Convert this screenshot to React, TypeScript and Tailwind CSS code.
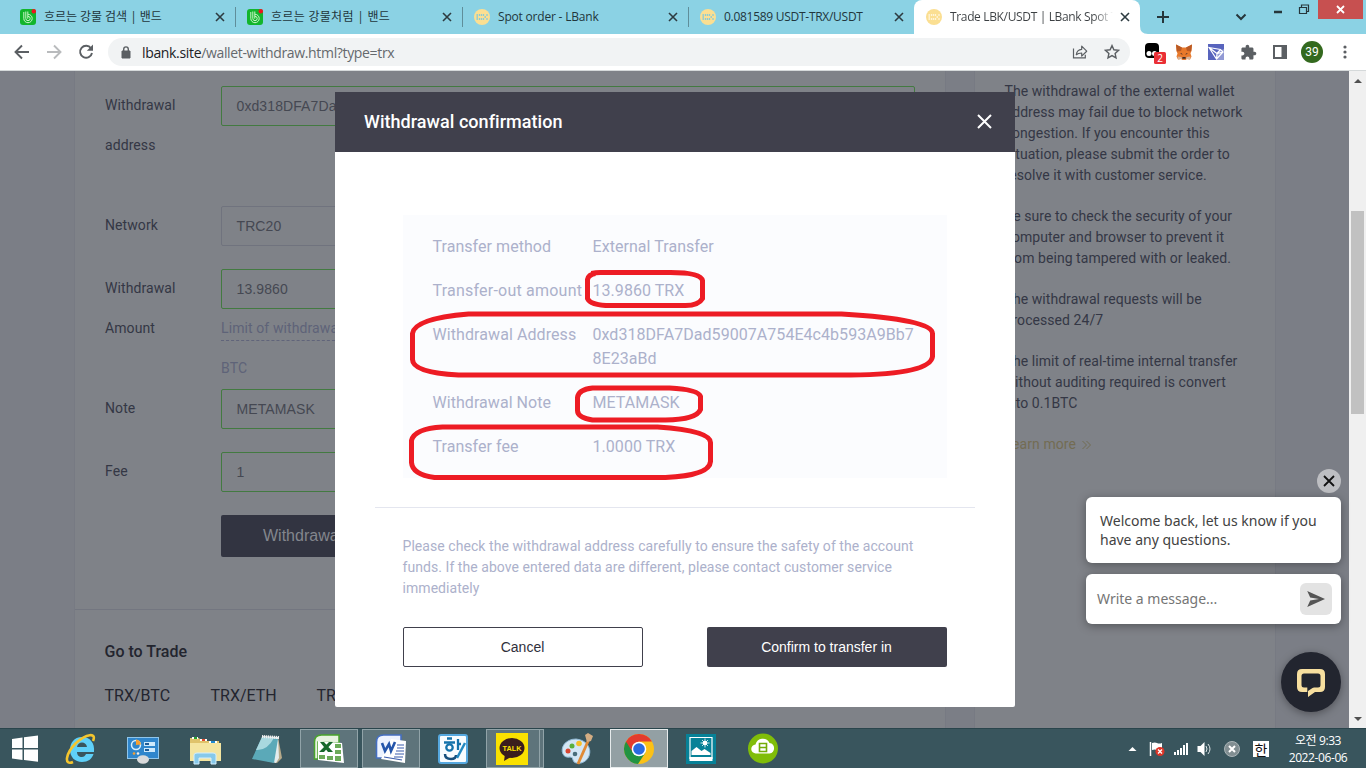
import type { ReactNode } from 'react';

const Cross = ({ size = 8, w = 1.6, color = '#2d3b40' }: { size?: number; w?: number; color?: string }) => (
  <svg width={size} height={size} viewBox="0 0 8 8" className="shrink-0 overflow-visible">
    <path d="M0 0L8 8M8 0L0 8" stroke={color} strokeWidth={(w * 8) / size} />
  </svg>
);

const BandIcon = () => (
  <svg width="16" height="16" viewBox="0 0 16 16" className="shrink-0">
    <rect width="16" height="16" rx="3" fill="#12b52c" />
    <path d="M3.800 3v6.500a4.200 4.200 0 1 0 4.200-4.200M5.800 2.500v7a2.200 2.200 0 1 0 2.200-2.200M7.800 2.500V9.700" fill="none" stroke="#c9f5c6" strokeWidth="1" />
    <circle cx="13.8" cy="2.2" r="2.2" fill="#f0141e" />
  </svg>
);

const BankIcon = ({ fg }: { fg: string }) => (
  <svg width="16" height="16" viewBox="0 0 16 16" className="shrink-0">
    <circle cx="8" cy="8" r="8" fill="#fbdf92" />
    <path d="M3.200 5v6M5.500 5v2M5.500 9v2M7.500 5v2M7.500 9v2M9.500 5v2M9.500 9v2M11.200 7v2M13 5v2M13 9v2" stroke={fg} strokeWidth="1.300" fill="none" />
  </svg>
);

const Tab = ({ icon, title, active, className, text }: { icon: ReactNode; title: string; active?: boolean; className: string; text: string }) => (
  <div className={`flex h-[34px] shrink-0 items-center ${className}`}>
    {icon}
    <span className={`ml-2 shrink-0 overflow-hidden whitespace-nowrap text-[12px] leading-4 ${text} ${active ? 'bg-linear-to-r from-[#3c4043] from-88% to-white bg-clip-text text-transparent' : 'text-[#22363c]'}`}>{title}</span>
    <span className="flex w-2"><Cross /></span>
  </div>
);

const Divider = () => <div className="mt-[7px] h-5 w-px shrink-0 bg-[#5f8e9a]" />;

const Toolbar = () => (
  <div className="flex h-9 items-center bg-white">
    <svg width="108" height="36" viewBox="0 0 108 36" className="shrink-0" fill="none" strokeWidth="1.9">
      <path d="M29 18H16M22 11.5L15.5 18L22 24.5" stroke="#5b5f63" />
      <path d="M47 18H60M54 11.5L60.5 18L54 24.5" stroke="#b9bbbd" />
      <path d="M91 14.2A6 6 0 1 0 92 19" stroke="#5b5f63" />
      <path d="M93 10.5v6.2h-6.2z" fill="#5b5f63" />
    </svg>
    <div className="flex h-7 w-[1022px] shrink-0 items-center rounded-full bg-[#f1f3f4] pl-[13px] pr-[10px]">
      <svg width="10" height="13" viewBox="0 0 10 13">
        <path d="M1 5h8v7H1z" fill="#5b5f63" stroke="#5b5f63" strokeLinejoin="round" />
        <path d="M2.7 5V3.2a2.3 2.3 0 0 1 4.6 0V5" fill="none" stroke="#5b5f63" strokeWidth="1.4" />
      </svg>
      <span className="ml-[11px] text-[14px] tracking-[-0.34px] text-[#202124]">lbank.site<span className="text-[#65696d]">/wallet-withdraw.html?type=trx</span></span>
      <svg width="16" height="16" viewBox="0 0 16 16" className="ml-auto" fill="none" stroke="#5b5f63" strokeWidth="1.2">
        <path d="M1.5 4.5v9.3h11.8v-3" />
        <path d="M4.3 10.7c.4-3.4 2.2-5.2 5.4-5.4V2.2l5 5-5 4.9V9c-2.2 0-4 .4-5.4 1.7z" strokeLinejoin="round" />
      </svg>
      <svg width="16" height="16" viewBox="0 0 16 16" className="ml-4" fill="none" stroke="#5b5f63" strokeWidth="1.4">
        <path d="M8 1.6l1.900 4.200 4.600.5-3.400 3.100.9 4.500L8 11.600l-4 2.300.9-4.500-3.400-3.100 4.600-.5z" />
      </svg>
    </div>
    <div className="flex items-center pl-[14px]">
      <svg width="22" height="24" viewBox="0 0 22 24">
        <rect x="1" y="3" width="14" height="15" rx="4" fill="#000" />
        <circle cx="5" cy="13.5" r="2.5" fill="#fff" /><circle cx="10.5" cy="13.5" r="2.5" fill="#fff" />
        <rect x="10" y="12" width="12" height="12" rx="1.5" fill="#ea2f35" />
        <text x="16" y="21.7" fontSize="10" fill="#fff" textAnchor="middle">2</text>
      </svg>
      <svg width="16" height="16" viewBox="0 0 16 16" className="ml-[10px]">
        <path d="M0 .5L6 3.5h4l6-3-.5 6-1 3 1 3-1.5 3-3-.5-1.5 1h-3L5 15l-3 .5-1.5-3 1-3L.5 7z" fill="#e8792b" />
        <path d="M0 .5l6 3L5 7 .8 7.5zM16 .5l-6 3L11 7l4.2.5z" fill="#b95a25" />
        <path d="M4 9l2 .5.5 1.5zM12 9l-2 .5-.5 1.5zM6.5 13h3l.3 1.7H6.2z" fill="#3b2c2c" />
        <path d="M1.5 12.5l4 .5.5 2-4 .5zM14.5 12.5l-4 .5-.5 2 4 .5z" fill="#d9b59a" />
      </svg>
      <svg width="16" height="16" viewBox="0 0 16 16" className="ml-4">
        <rect width="16" height="16" fill="#5864bd" />
        <path d="M9 8l7-3v11H9z" fill="#fff" opacity=".35" />
        <path d="M1 3.500L12.500 5.500L15 8L8.500 15zL9 9.500L15 8M9 9.500L12.500 5.500M9 9.500L8.500 15" stroke="#fff" strokeWidth="1.200" fill="none" />
      </svg>
      <svg width="17" height="17" viewBox="0 0 24 24" className="ml-4"><path fill="#5b5f63" d="M20.500 11H19V7c0-1.100-.9-2-2-2h-4V3.500C13 2.120 11.880 1 10.500 1S8 2.120 8 3.500V5H4c-1.100 0-1.990.9-1.990 2v3.800H3.500c1.490 0 2.700 1.210 2.700 2.700s-1.210 2.700-2.700 2.700H2V20c0 1.100.9 2 2 2h3.800v-1.500c0-1.490 1.210-2.700 2.700-2.700s2.700 1.210 2.700 2.700V22H17c1.100 0 2-.9 2-2v-4h1.500c1.380 0 2.500-1.120 2.500-2.500S21.880 11 20.500 11z" /></svg>
      <svg width="14" height="14" viewBox="0 0 14 14" className="ml-4"><path d="M1 1h12v12H1z" fill="none" stroke="#5b5f63" strokeWidth="2" /><path d="M8.5 1H13v12H8.5z" fill="#5b5f63" /></svg>
      <span className="ml-[14px] flex size-[22px] items-center justify-center rounded-full bg-[#33691e] font-[Roboto] text-[12px] text-white">39</span>
      <svg width="4" height="14" viewBox="0 0 4 14" className="ml-5" fill="#5b5f63"><circle cx="2" cy="2" r="1.6" /><circle cx="2" cy="7" r="1.6" /><circle cx="2" cy="12" r="1.6" /></svg>
    </div>
  </div>
);

const Field = ({ value, ok = true }: { value: string; ok?: boolean }) => (
  <div className={`mt-px flex h-10 w-[694px] items-center rounded-xs border pl-[14.5px] font-['Liberation_Sans'] text-[14px] tracking-[0.1px] text-[#454852] ${ok ? 'border-[#437a41]' : 'border-[#70737e]'}`}>{value}</div>
);

const Row = ({ label, h, children }: { label: ReactNode; h: string; children: ReactNode }) => (
  <div className={`flex ${h}`}>
    <div className="w-[116px] shrink-0 whitespace-pre-line text-[14px] leading-[40px] tracking-[0.08px] text-[#343745]">{label}</div>
    <div>{children}</div>
  </div>
);

const paragraphs = [
  'The withdrawal of the external wallet\naddress may fail due to block network\ncongestion. If you encounter this\nsituation, please submit the order to\nresolve it with customer service.',
  'Be sure to check the security of your\ncomputer and browser to prevent it\nfrom being tampered with or leaked.',
  'The withdrawal requests will be\nprocessed 24/7',
  'The limit of real-time internal transfer\nwithout auditing required is convert\ninto 0.1BTC',
];

const details = [
  ['Transfer method', 'External Transfer', 'tracking-[0.05px]'],
  ['Transfer-out amount', '13.9860 TRX', 'tracking-[0.22px]'],
  ['Withdrawal Address', '0xd318DFA7Dad59007A754E4c4b593A9Bb7\n8E23aBd', 'tracking-[0.08px]'],
  ['Withdrawal Note', 'METAMASK', 'tracking-[0.05px]'],
  ['Transfer fee', '1.0000 TRX', 'tracking-[0.05px]'],
];

const Modal = () => (
  <div className="absolute left-[335px] top-[21px] h-[615px] w-[680px] rounded-xs bg-white">
    <div className="flex h-[60px] items-center justify-between bg-[#40404c] pb-[2px] pl-[29px] pr-[24px] text-[18px] font-medium tracking-[0.04px] text-white">
      Withdrawal confirmation
      <Cross size={13} w={2} color="#fff" />
    </div>
    <div className="mx-[68px] mt-[63px] flex h-[263px] flex-col gap-5 bg-[#fbfcfe] pl-[29.5px] pt-5 text-[16px] leading-6 text-[#acb1cb]">
      {details.map(([k, v, tracking]) => (
        <div key={k} className="flex">
          <span className={`w-40 shrink-0 whitespace-nowrap ${tracking}`}>{k}</span>
          <span className="whitespace-pre tracking-[0.05px]">{v}</span>
        </div>
      ))}
    </div>
    <div className="mx-10 mt-[29px] h-px bg-[#e4e6ef]" />
    <p className="ml-[67.5px] mt-7 whitespace-pre text-[14px] leading-[21px] tracking-[0.06px] text-[#acb1cb]">{'Please check the withdrawal address carefully to ensure the safety of the account\nfunds. If the above entered data are different, please contact customer service\nimmediately'}</p>
    <div className="mx-[68px] mt-7 flex justify-between font-['Liberation_Sans'] text-[14px]">
      <button className="h-10 w-60 rounded-xs border border-[#40404c] pr-px text-[#30303c]">Cancel</button>
      <button className="h-10 w-60 rounded-xs bg-[#40404c] pr-px text-white">Confirm to transfer in</button>
    </div>
    <svg width="680" height="615" viewBox="334.500 91.500 680 615" className="pointer-events-none absolute left-0 top-0" fill="none" stroke="#ed1c24" strokeWidth="5">
      <path d="M591 273q4-1 9-1h70q30 0 32 8v18q-4 7-17 7h-75q-20 0-23-7v-19q1-5 8-6z" />
      <path d="M468 313.500H841Q932 319 932 333V356Q930 374 850 374.500H458Q412 372 412 359V333Q414 318 468 313.500Z" />
      <path d="M592 387.500H669Q698 389 700 396V409Q696 419 665 419.500H592Q577 417 577 410V397Q578 389 592 387.500Z" />
      <path d="M442 426.500H657Q710 430 710 442V461Q709 475 665 477H434Q412 474 411 462V440Q414 428 442 426.500Z" />
    </svg>
  </div>
);

const Chat = () => (
  <div className="absolute left-[1086px] top-[398px] flex w-[255px] flex-col items-end font-['Noto_Sans']">
    <div className="flex size-6 items-center justify-center rounded-full bg-[#bdbec2]"><Cross size={10} w={1.8} color="#111" /></div>
    <div className="mt-1 h-[66px] w-full whitespace-pre rounded-md bg-white pl-[14px] pt-[14px] text-[14px] leading-[19px] text-[#424242] shadow-[0_2px_10px_rgba(0,0,0,0.35)]">{'Welcome back, let us know if you\nhave any questions.'}</div>
    <div className="mt-[11px] flex h-[50px] w-full items-center justify-between rounded-md bg-white pl-[11px] pr-[9px] text-[14px] text-[#757575] shadow-[0_2px_10px_rgba(0,0,0,0.35)]">
      <span className="pb-0.5">Write a message...</span>
      <span className="flex size-8 items-center justify-center rounded-md bg-[#e3e3e3]">
        <svg width="18" height="16" viewBox="0 0 18 16"><path d="M.2 0L18 8L.2 16L3.200 9.500L12 8L3.200 6.500Z" fill="#555" /></svg>
      </span>
    </div>
    <div className="mt-7 flex size-[60px] items-center justify-center rounded-full bg-[#22252f] shadow-[0_2px_8px_rgba(0,0,0,0.35)]">
      <svg width="28" height="28" viewBox="0 0 28 28" className="mt-0.5"><path fillRule="evenodd" d="M5 0H23Q28 0 28 5V18Q28 23 23 23H18L11 28V18.500H21Q23.500 18.500 23.500 16V7Q23.500 4.500 21 4.500H7Q4.500 4.500 4.500 7V16Q4.500 18.500 7 18.500H10.300V23H5Q0 23 0 18V5Q0 0 5 0Z" fill="#f7df9f" /><path d="M11 18v4l6-4z" fill="#22252f" /></svg>
    </div>
  </div>
);

const Slot = ({ children, frame = '' }: { children: ReactNode; frame?: string }) => (
  <div className={`mx-0.5 flex h-[39px] w-[58px] shrink-0 items-center justify-center border ${frame || 'border-transparent'}`}>
    <svg width="32" height="32" viewBox="0 0 32 32">{children}</svg>
  </div>
);

const OPEN = 'border-[#91a3a8] bg-[#5e747b]';

const Taskbar = () => (
  <div className="flex h-10 items-center border-t border-[#2a454c] bg-[#39555d]">
    <svg width="50" height="39" viewBox="0 0 50 39" className="shrink-0" fill="#fff"><path d="M12 10l10.500-1.500V19H12zM24 8.300L38 6.500V19H24zM12 20.500h10.500V31L12 29.500zM24 20.500h14v12.300L24 31z" /></svg>
    <Slot>
      <path fillRule="evenodd" d="M17 4C9 4 5 10 5 17s5 12 12 12c6 0 10-3 11.500-8H21c-1 2-2 3-4 3-3 0-5-2-5-5h17C30 10 25 4 17 4zM12 14c.500-3 2.500-4.500 5-4.500s4.500 1.500 5 4.500z" fill="#5fd0f8" />
      <path d="M8 29C-1 33 0 21 11 10C21 1 32-1 28 8" fill="none" stroke="#f4c52e" strokeWidth="2.600" />
    </Slot>
    <Slot>
      <rect x=".5" y="4.500" width="31" height="21" fill="#2f86cc" stroke="#8fc6ec" />
      <circle cx="9" cy="12" r="4.500" fill="none" stroke="#d8efff" strokeWidth="1.500" /><path d="M9 12V6.500a5.500 5.500 0 0 1 5 5z" fill="#f5a033" />
      <path d="M17 9h11v4H17zM17 15h11v4H17z" fill="#cde9fb" /><path d="M18 10h4v2h-4zM18 16h4v2h-4z" fill="#1d5c98" />
      <circle cx="7" cy="20.500" r="1.300" fill="#f5a033" /><circle cx="11" cy="20.500" r="1.300" fill="#eee" />
      <ellipse cx="16" cy="26.500" rx="6" ry="4.200" fill="#d9dadb" />
    </Slot>
    <Slot>
      <path d="M1 5h9l2 3h18v18H1z" fill="#dfc36b" /><path d="M3 4h6v2H3zM11 6h7v2h-7zM20 8h8v2h-8z" fill="#fff" />
      <path d="M5 4h3v2H5z" fill="#26a02f" /><path d="M13 6h3v2h-3z" fill="#df4b2a" /><path d="M22 8h4v2h-4z" fill="#218ad1" />
      <path d="M1 10h31v18H1z" fill="#f4e5a0" /><path d="M5 31V22q0-2 3-2h16q3 0 3 2v9h-5v-6H10v6z" fill="#87c9ea" stroke="#d3efff" />
    </Slot>
    <Slot>
      <path d="M27 4l4 21-5 5-4-1z" fill="#b7aa8a" /><path d="M12 3l15 1 1 21-3 5-9-2z" fill="#e4eced" /><path d="M11 4L1 26l22 4 4-24z" fill="#5ba9b8" /><path d="M11 4L5 17q11 1 18-12z" fill="#a9d8df" />
      <path d="M11 3.500l17 1" stroke="#eee" strokeWidth="3" strokeDasharray="1.200 .8" />
    </Slot>
    <Slot frame={OPEN}>
      <path d="M1.500 26V9q0-7 7-7H26v8L5 9v17z" fill="#e8f2e0" stroke="#4aa32c" strokeWidth="1.500" />
      <path d="M5 8l24 2 2 20-26-3z" fill="#fff" />
      <path d="M22 11h6v4h-6zM22 17h6v4h-6zM22 23h6v5h-6zM14 23h6v4h-6zM6 22h6v4H6z" fill="#6cab59" />
      <path d="M7 9h4l9 10h-5zM16 9h4L11 19H6z" fill="#17682a" />
    </Slot>
    <Slot frame={OPEN}>
      <path d="M1.500 25V9q0-7 7-7H26v23z" fill="#edf3ff" stroke="#456fc1" strokeWidth="1.600" />
      <path d="M16 6l15 2-1 22-24-4z" fill="#fff" /><path d="M22 12h7M22 15h7M21 18h8M20 21h9M19 24h9M9 24l18 3" stroke="#3b5dac" strokeWidth="1.200" />
      <path d="M7 10l3 8 4-7 2 7 4-9" fill="none" stroke="#2455aa" strokeWidth="2.600" />
    </Slot>
    <Slot>
      <rect x="2" y="2" width="28" height="28" rx="2" fill="#f8fcff" stroke="#56a8df" strokeWidth="2" />
      <path d="M10 5.500h5M7 9.500h11M21 6v11M21 11h3" stroke="#1472ab" strokeWidth="2.300" /><circle cx="12.500" cy="14.500" r="3.200" fill="none" stroke="#1472ab" strokeWidth="2.300" /><path d="M8 21q0 5 6 5 5 0 5-4" fill="none" stroke="#174f7d" strokeWidth="2.500" /><path d="M28 10L20 25" stroke="#2389c1" strokeWidth="2.500" />
    </Slot>
    <div className="mx-0.5 flex h-[39px] w-[58px] shrink-0">
      <div className="flex w-[54px] items-center justify-center border border-[#91a3a8] bg-[#5e747b]">
        <svg width="32" height="32" viewBox="0 0 32 32" className="-ml-0.5"><path d="M0 0h32v32H0z" fill="#fae100" /><ellipse cx="16" cy="15" rx="12.500" ry="10" fill="#3a1d1d" /><path d="M9 21l-1 7 7-4z" fill="#3a1d1d" /><text x="16" y="18" fill="#fae100" textAnchor="middle" fontSize="8" fontWeight="bold" fontFamily="Liberation Sans" textLength="19" lengthAdjust="spacingAndGlyphs">TALK</text></svg>
      </div>
      <div className="w-1 border border-l-0 border-[#91a3a8] bg-[#5e747b]" />
    </div>
    <Slot>
      <path d="M15 6C4 6-1 15 2 21q2 4 7 3 3 0 3 3 1 4 8 3c12-3 13-22-5-24z" fill="#d3e6f4" stroke="#90bad6" />
      <circle cx="7" cy="18" r="2.500" fill="#d94632" /><circle cx="11" cy="13" r="2.500" fill="#5aaf3c" /><circle cx="18" cy="10.500" r="2.800" fill="#f5bf29" /><circle cx="14" cy="21" r="2.300" fill="#496d7a" />
      <path d="M28 6L17 31" stroke="#df8a36" strokeWidth="2.800" /><path d="M24 2l3-2 5 3-2 5-4 1z" fill="#d4ad83" />
    </Slot>
    <Slot frame="border-[#e6ebec] bg-[#93a0a4]">
      <circle cx="16" cy="16" r="15" fill="#fbc116" /><path d="M3 8.500A15 15 0 0 0 15 31l7.500-11.500L16 16z" fill="#229342" /><path d="M3 8.500A15 15 0 0 1 29 8.500H16L9.500 12l0 7z" fill="#e33b2e" /><circle cx="16" cy="16" r="7.300" fill="#fff" /><circle cx="16" cy="16" r="5.800" fill="#2a6be0" />
    </Slot>
    <Slot>
      <path d="M1 1h30v30H1z" fill="#078197" /><path d="M5 4.500h22v21H5z" fill="none" stroke="#fff" strokeWidth="1.200" /><path d="M4.500 24h23v4h-23z" fill="#fff" /><path d="M6.500 22v-4l5-4 5 4 3-2 6 4v2z" fill="#fff" /><circle cx="20" cy="10" r="2.300" fill="#fff" /><path d="M20 5.500v9M15.500 10h9M17 7l6 6M23 7l-6 6" stroke="#fff" strokeWidth=".8" />
    </Slot>
    <Slot>
      <circle cx="16" cy="15.500" r="15" fill="#80bd09" /><path d="M9 20.500a4.500 4.500 0 0 1-.5-9A7.500 7.500 0 0 1 22.500 10a5.300 5.300 0 0 1 0 10.500z" fill="#fff" /><path d="M12.500 10.500h7v8h-7zM12.500 14.500h7" fill="none" stroke="#73ac08" strokeWidth="1.600" />
    </Slot>
    <svg width="146" height="39" viewBox="1126 729 146 39" className="ml-[332px] shrink-0">
      <path d="M1128.500 751h8l-4-4z" fill="#fff" />
      <path d="M1150.500 742v14" stroke="#fff" strokeWidth="1.500" /><path d="M1152 743q3-1 5 0t5 0v7q-3 1-5 0t-5 0z" fill="#fff" /><circle cx="1160" cy="751.500" r="4.500" fill="#dc3528" /><path d="M1158 749.500l4 4m0-4l-4 4" stroke="#fff" strokeWidth="1.300" />
      <path d="M1174 752v3h2v-3zM1177 750v5h2v-5zM1180 748v7h2v-7zM1183 745v10h2v-10zM1186 743v12h2v-12z" fill="#fff" />
      <path d="M1197.500 746v6h3l4 4v-14l-4 4z" fill="#fff" /><path d="M1206 746q2 3 0 6M1208 744q4 5 0 10" fill="none" stroke="#dce4e6" />
      <circle cx="1232" cy="749" r="7.500" fill="#818e92" stroke="#abb5b8" /><path d="M1229 746l6 6m0-6l-6 6" stroke="#fff" strokeWidth="2" />
      <path d="M1253 741h16v16h-16z" fill="#fff" /><text x="1261" y="754.500" fontSize="14" fontFamily="Noto Sans CJK KR" textAnchor="middle" fill="#111">한</text>
    </svg>
    <div className="flex-1 whitespace-nowrap pr-0.5 text-center font-['Open_Sans','Noto_Sans_CJK_KR',sans-serif] text-[12px] leading-[17px] tracking-[-0.4px] text-white">오전 9:33<br />2022-06-06</div>
  </div>
);

export default function App() {
  return (
    <div className="h-[768px] w-[1366px] overflow-hidden font-['Open_Sans','Noto_Sans_CJK_KR',sans-serif]">
      <header>
        <div className="flex h-[34px] bg-[#8bd2e4] pl-2">
          <Tab className="w-[227px] pl-3" text="w-[172px] tracking-[-0.05px]" icon={<BandIcon />} title="흐르는 강물 검색 | 밴드" />
          <Divider />
          <Tab className="w-[226px] pl-[11px]" text="w-[172px] tracking-[0.3px]" icon={<BandIcon />} title="흐르는 강물처럼 | 밴드" />
          <Divider />
          <Tab className="w-[225px] pl-[11px]" text="w-[171px] tracking-[-0.2px]" icon={<BankIcon fg="#8bcbd5" />} title="Spot order - LBank" />
          <Divider />
          <Tab className="w-[225px] pl-[11px]" text="w-[171px] tracking-[-0.28px]" icon={<BankIcon fg="#8bcbd5" />} title="0.081589 USDT-TRX/USDT" />
          <Tab className="w-[226px] rounded-t-lg bg-white pl-3" text="w-[163px] mr-2 tracking-[-0.35px]" icon={<BankIcon fg="#fff5d8" />} title="Trade LBK/USDT | LBank Spot T" active />
          <svg width="178" height="34" viewBox="1140 0 178 34" fill="none" stroke="#26363b">
            <path d="M1140 26q0 8 8 8h-8z" fill="#fff" stroke="none" />
            <path d="M1157 17h12M1163 11v12" strokeWidth="2" /><path d="M1236.500 14.500l4.500 4.500 4.500-4.500" strokeWidth="2" />
            <path d="M1274 12h8" strokeWidth="2.500" /><path d="M1299.500 7.500h7v6h-7zM1301.500 7V5h7v6.500h-2" strokeWidth="1.200" />
          </svg>
          <div className="flex h-[19px] w-[45px] items-center justify-center bg-[#c75050]"><Cross size={7} w={1.8} color="#fff" /></div>
        </div>
        <Toolbar />
        <div className="h-px bg-[#d5d9da]" />
      </header>
      <div className="flex h-[657px] font-[Roboto]">
        <main className="relative flex w-[1349px] bg-[#7b7e86] pl-[74px]">
          <section className="w-[872px] shrink-0 border-x border-[#777a83] bg-[#7f8288]">
            <div className="h-[539px] border-b border-[#737680] pl-[30px] pt-[14px]">
              <Row label={'Withdrawal\naddress'} h="h-[120px]"><Field value="0xd318DFA7Dad59007A754E4c4b593A9Bb78E23aBd" /></Row>
              <Row label="Network" h="h-[63px]"><Field value="TRC20" ok={false} /></Row>
              <Row label={'Withdrawal\nAmount'} h="h-[120px]">
                <Field value="13.9860" />
                <div className="-mt-px text-[14px] leading-[40px] tracking-[0.1px] text-[#5e6378]">
                  <div className="relative h-10 w-60 whitespace-nowrap">Limit of withdrawal amount<span className="absolute bottom-[7px] left-0 w-full border-b border-dashed border-[#60647a]" /></div>
                  BTC
                </div>
              </Row>
              <Row label="Note" h="h-[63px]"><Field value="METAMASK" /></Row>
              <Row label="Fee" h="h-[63px]"><Field value="1" /></Row>
              <Row label="" h="h-[63px]"><div className="mt-px flex h-[42px] w-60 items-center rounded-xs bg-[#323441] pl-[42px] font-['Liberation_Sans'] text-[16px] text-[#83868d]">Withdrawal</div></Row>
            </div>
            <div className="pl-[29.5px] pt-8 text-[#23252f]">
              <h2 className="text-[16px] font-medium leading-5">Go to Trade</h2>
              <div className="mt-6 flex text-[16px] leading-5"><span className="w-[106px]">TRX/BTC</span><span className="w-[106px]">TRX/ETH</span><span>TRX/USDT</span></div>
            </div>
          </section>
          <aside className="ml-7 w-[302px] shrink-0 border-x border-[#777a83] bg-[#7f8288] pl-[29.5px] pt-[10px] text-[14px] leading-[21px] tracking-[0.06px] text-[#343745]">
            {paragraphs.map((p) => <p key={p} className="mb-[20px] whitespace-pre">{p}</p>)}
            <p className="flex items-center text-[#736c53]">Learn more
              <svg width="9" height="8" viewBox="0 0 9 8" className="ml-1.5" fill="none" stroke="#736c53"><path d="M.5 0l4 4-4 4M4.500 0l4 4-4 4" /></svg>
            </p>
          </aside>
          <Modal />
          <Chat />
        </main>
        <div className="flex w-[17px] flex-col items-center bg-[#f0f0f0] pt-2">
          <svg width="8" height="4" viewBox="0 0 8 4"><path d="M0 4h8L4 0z" fill="#505050" /></svg>
          <div className="mt-32 h-[203px] w-[13px] bg-[#c1c1c1]" />
          <svg width="8" height="4" viewBox="0 0 8 4" className="mb-[7px] mt-auto"><path d="M0 0h8L4 4z" fill="#505050" /></svg>
        </div>
      </div>
      <Taskbar />
    </div>
  );
}
